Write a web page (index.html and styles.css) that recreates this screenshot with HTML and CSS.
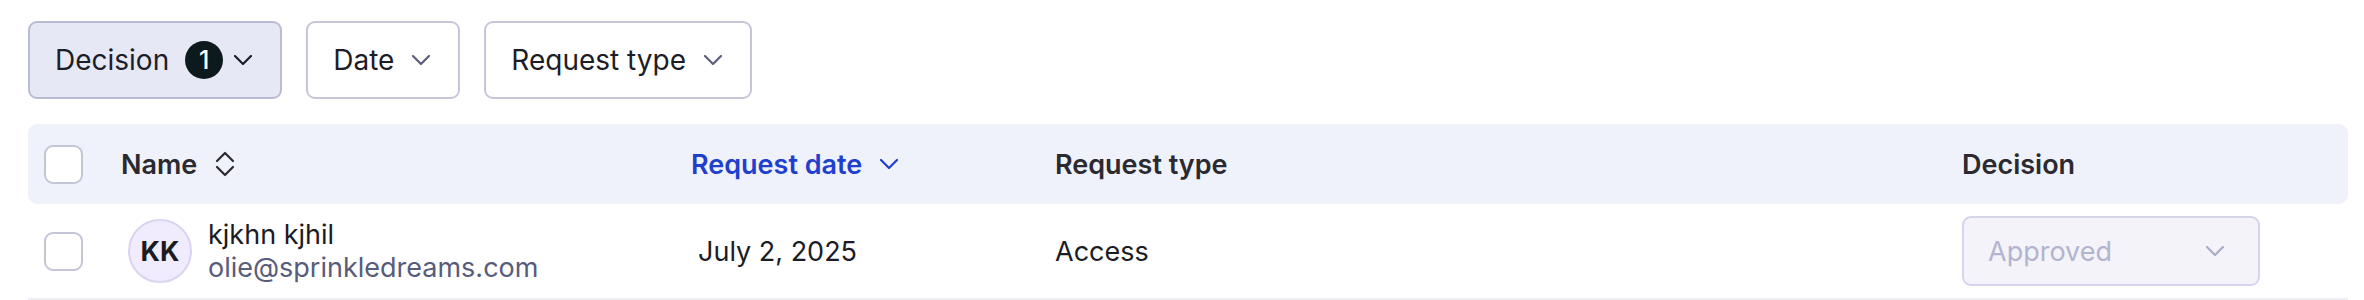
FILE: index.html
```html
<!DOCTYPE html>
<html lang="en">
<head>
<meta charset="utf-8">
<title>Requests</title>
<link rel="stylesheet" href="styles.css">
</head>
<body>
<div class="page">
  <div class="filters">
    <button class="filter active">
      <span class="filter-label">Decision</span>
      <span class="badge">1</span>
      <svg class="chev" viewBox="0 0 18 10" width="18" height="10"><path d="M1 1 L9 9 L17 1"/></svg>
    </button>
    <button class="filter">
      <span class="filter-label">Date</span>
      <svg class="chev muted" viewBox="0 0 18 10" width="18" height="10"><path d="M1 1 L9 9 L17 1"/></svg>
    </button>
    <button class="filter">
      <span class="filter-label">Request type</span>
      <svg class="chev muted" viewBox="0 0 18 10" width="18" height="10"><path d="M1 1 L9 9 L17 1"/></svg>
    </button>
  </div>

  <div class="table">
    <div class="thead">
      <div class="cell check"><span class="checkbox"></span></div>
      <div class="cell th">
        <span>Name</span>
        <svg class="sort" viewBox="0 0 20 26" width="20" height="26"><path d="M2 10 L10 2 L18 10"/><path d="M2 16 L10 24 L18 16"/></svg>
      </div>
      <div class="cell th sorted">
        <span>Request date</span>
        <svg class="chev blue" viewBox="0 0 18 10" width="18" height="10"><path d="M1 1 L9 9 L17 1"/></svg>
      </div>
      <div class="cell th">Request type</div>
      <div class="cell th">Decision</div>
    </div>

    <div class="trow">
      <div class="cell check"><span class="checkbox"></span></div>
      <div class="cell person">
        <span class="avatar">KK</span>
        <div class="person-text">
          <span class="person-name">kjkhn kjhil</span>
          <span class="person-email">olie@sprinkledreams.com</span>
        </div>
      </div>
      <div class="cell date">July 2, 2025</div>
      <div class="cell">Access</div>
      <div class="cell">
        <div class="select">
          <span>Approved</span>
          <svg class="chev faint" viewBox="0 0 18 10" width="18" height="10"><path d="M1 1 L9 9 L17 1"/></svg>
        </div>
      </div>
    </div>
  </div>
</div>
</body>
</html>
```

FILE: styles.css
```css
* { box-sizing: border-box; }

html, body {
  margin: 0;
  padding: 0;
  background: #ffffff;
}

body {
  font-family: Inter, "Liberation Sans", sans-serif;
  color: #1c1c26;
  font-size: 27px;
}

.page {
  padding: 21px 16px 0 28px;
}

.filters {
  display: flex;
  gap: 24px;
}

.filter {
  display: flex;
  align-items: center;
  height: 78px;
  padding: 0 28px 0 25px;
  border: 2px solid #c5c6da;
  border-radius: 9px;
  background: #ffffff;
  font-family: inherit;
  font-size: 28px;
  color: #1d1d28;
  gap: 18px;
}

.filter.active {
  background: #e6e8f6;
  border-color: #b9bbd4;
}

.filter.active .badge {
  margin-left: -2px;
}

.filter.active .chev {
  margin-left: -7px;
}

.badge {
  display: inline-flex;
  align-items: center;
  justify-content: center;
  width: 38px;
  height: 38px;
  border-radius: 50%;
  background: #0c1a1d;
  color: #ffffff;
  font-size: 25px;
  font-weight: 500;
}

.chev {
  flex: none;
  fill: none;
  stroke: #1d1d28;
  stroke-width: 2.2;
  stroke-linecap: round;
  stroke-linejoin: round;
}

.chev.muted { stroke: #5b5e7c; }
.chev.blue { stroke: #1f3fcf; }
.chev.faint { stroke: #aaabc6; }

.table {
  margin-top: 25px;
}

.thead,
.trow {
  display: grid;
  grid-template-columns: 93px 570px 364px 907px 1fr;
  align-items: center;
}

.thead {
  height: 80px;
  background: #f0f2fb;
  border-radius: 9px;
}

.trow {
  height: 96px;
  border-bottom: 2px solid #eeeef4;
}

.cell {
  display: flex;
  align-items: center;
}

.check {
  padding-left: 16px;
}

.checkbox {
  display: block;
  width: 39px;
  height: 39px;
  border: 2px solid #c4c5d8;
  border-radius: 9px;
  background: #ffffff;
}

.th {
  font-weight: 600;
  color: #2a2a30;
  gap: 18px;
}

.th.sorted {
  color: #1f3fcf;
}

.sort {
  fill: none;
  stroke: #2a2a30;
  stroke-width: 2.2;
  stroke-linecap: round;
  stroke-linejoin: round;
}

.person {
  padding-left: 7px;
  gap: 16px;
}

.avatar {
  display: flex;
  align-items: center;
  justify-content: center;
  width: 64px;
  height: 64px;
  border-radius: 50%;
  background: #f1ecfd;
  border: 2px solid #dad3f2;
  font-size: 27px;
  font-weight: 700;
  color: #1b1b22;
  flex: none;
}

.person-text {
  display: flex;
  flex-direction: column;
  line-height: 33px;
}

.person-name {
  color: #1b1b24;
}

.person-email {
  color: #585c7c;
}

.date {
  padding-left: 7px;
}

.select {
  display: flex;
  align-items: center;
  justify-content: space-between;
  width: 298px;
  height: 70px;
  padding: 0 34px 0 24px;
  border: 2px solid #d4d5ea;
  border-radius: 9px;
  background: #f3f3f9;
  color: #b3b4cf;
}
```
